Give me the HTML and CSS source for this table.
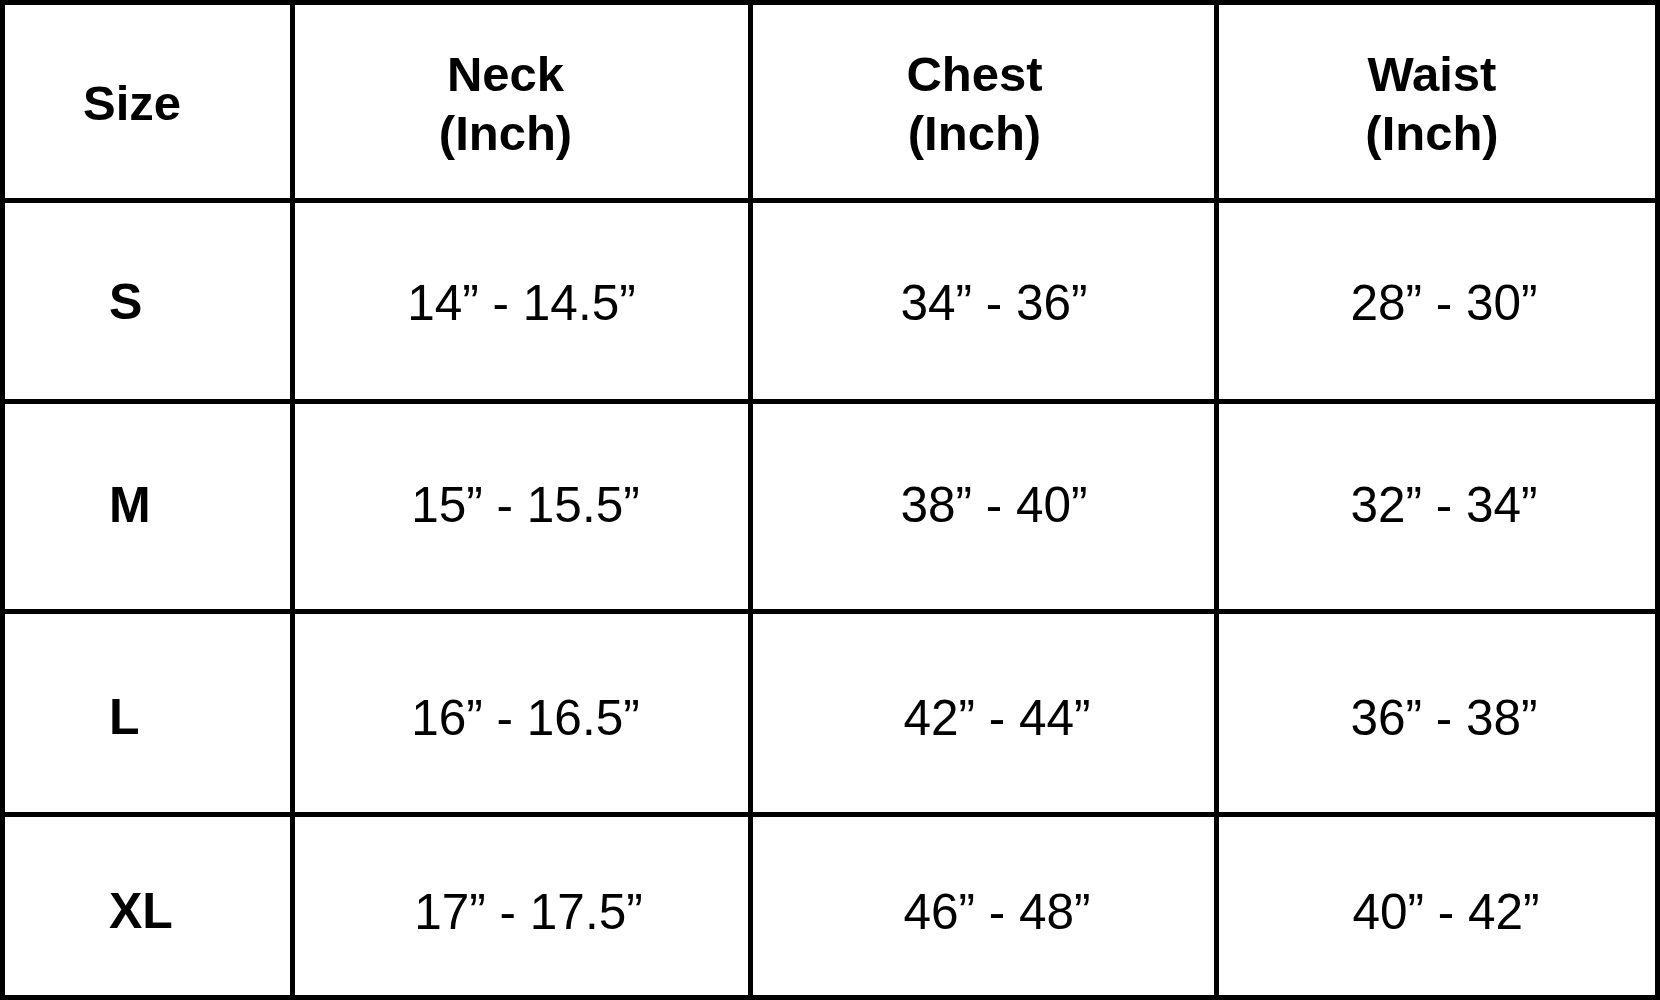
FILE: index.html
```html
<!DOCTYPE html>
<html>
<head>
<meta charset="utf-8">
<link rel="stylesheet" href="styles.css">
<title>Size Chart</title>
</head>
<body>
<div class="chart">
  <div class="cell head size-col size-head">Size</div>
  <div class="cell head neck-head"><span>Neck<br>(Inch)</span></div>
  <div class="cell head chest-head"><span>Chest<br>(Inch)</span></div>
  <div class="cell head waist-head"><span>Waist<br>(Inch)</span></div>

  <div class="cell size-col row-s">S</div>
  <div class="cell neck row-s">14” - 14.5”</div>
  <div class="cell chest row-s">34” - 36”</div>
  <div class="cell waist row-s">28” - 30”</div>

  <div class="cell size-col row-m">M</div>
  <div class="cell neck row-m">15” - 15.5”</div>
  <div class="cell chest row-m">38” - 40”</div>
  <div class="cell waist row-m">32” - 34”</div>

  <div class="cell size-col row-l">L</div>
  <div class="cell neck row-l">16” - 16.5”</div>
  <div class="cell chest row-l">42” - 44”</div>
  <div class="cell waist row-l">36” - 38”</div>

  <div class="cell size-col row-xl">XL</div>
  <div class="cell neck row-xl">17” - 17.5”</div>
  <div class="cell chest row-xl">46” - 48”</div>
  <div class="cell waist row-xl">40” - 42”</div>
</div>
</body>
</html>
```
FILE: styles.css
```css
html, body {
  margin: 0;
  padding: 0;
  background: #fff;
}

.chart {
  width: 1660px;
  height: 1000px;
  box-sizing: border-box;
  display: grid;
  grid-template-columns: 285px 453px 461px 436px;
  grid-template-rows: 193px 196px 205px 198px 178px;
  gap: 5px;
  padding: 5px;
  background: #000;
  font-family: "Liberation Sans", Arial, sans-serif;
  font-size: 49.5px;
  color: #000;
}

.cell {
  background: #fff;
  display: flex;
  align-items: center;
  justify-content: center;
  box-sizing: border-box;
  white-space: nowrap;
  line-height: 1.15;
}

.head {
  font-size: 49px;
  font-weight: bold;
  text-align: center;
  line-height: 59px;
}

.size-col {
  font-size: 50px;
  font-weight: bold;
  justify-content: flex-start;
  padding-left: 104px;
}

.size-head {
  font-size: 49px;
  padding-left: 78px;
  padding-top: 3px;
}

.neck-head { padding-right: 32px; padding-top: 4px; }
.chest-head { padding-right: 18px; padding-top: 4px; }
.waist-head { padding-right: 10px; padding-top: 4px; }

.neck { padding-left: 8px; }
.chest { padding-left: 21px; }
.waist { padding-left: 14px; }

.neck.row-s { padding-left: 0; }
.neck.row-xl { padding-left: 14px; }
.chest.row-l, .chest.row-xl { padding-left: 27px; }
.waist.row-xl { padding-left: 18px; }

.row-s { padding-top: 4px; }
.row-m { padding-bottom: 2px; }
.row-l { padding-top: 10px; }
.row-xl { padding-top: 12px; }
```
